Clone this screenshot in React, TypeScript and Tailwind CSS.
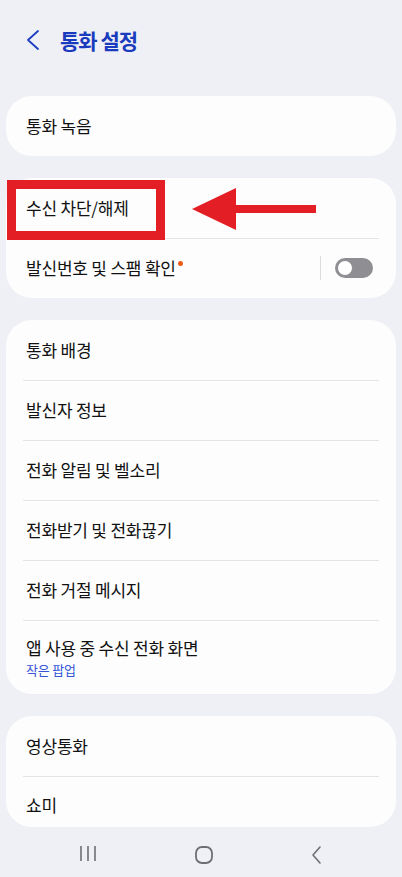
import React from "react";

const font = { fontFamily: '"Noto Sans CJK KR", "Noto Sans", sans-serif' };

function Divider() {
  return <div className="relative mx-[17px] -mb-px h-px bg-[#e4e4e8]" />;
}

function Row({ label, children }: { label: string; children?: React.ReactNode }) {
  return (
    <div className="flex h-[60px] items-center px-5 text-[17px] tracking-[-0.2px] text-[#111111]">
      <span>{label}</span>
      {children}
    </div>
  );
}

export default function App() {
  return (
    <div style={font} className="flex h-[877px] w-[402px] flex-col overflow-hidden bg-[#eff0f5]">
      {/* Header */}
      <div className="grid h-[96px] shrink-0 grid-cols-[60px_1fr] items-start pt-[26px]">
        <div className="flex justify-end pr-[18px] pt-[3px]">
          <svg width="18" height="22" viewBox="0 0 18 22" fill="none">
            <path d="M14 2 L4 11 L14 20" stroke="#1c3dbf" strokeWidth="1.8" strokeLinecap="round" strokeLinejoin="round" />
          </svg>
        </div>
        <div className="text-[21px] font-bold leading-[28px] tracking-[-1px] text-[#1a3bbd]">통화 설정</div>
      </div>

      <div className="flex flex-col gap-[22px] px-[6px]">
        {/* Card 1 */}
        <div className="rounded-[26px] bg-[#fdfdfd]">
          <Row label="통화 녹음" />
        </div>

        {/* Card 2 */}
        <div className="relative rounded-[26px] bg-[#fdfdfd]">
          <Row label="수신 차단/해제" />
          <Divider />
          <Row label="발신번호 및 스팸 확인">
            <span className="mb-[10px] ml-[2px] h-[5px] w-[5px] rounded-full bg-[#ef5b17]" />
            <div className="ml-auto flex items-center">
              <div className="h-[24px] w-px bg-[#dcdce0]" />
              <div className="ml-[14px] mr-[3px] flex h-[20px] w-[38px] items-center rounded-full bg-[#8e8e93] pl-[2px]">
                <div className="h-[16px] w-[16px] rounded-full border-[1.5px] border-[#8e8e93] bg-white" />
              </div>
            </div>
          </Row>
          {/* highlight box */}
          <div className="absolute left-[1px] top-[2px] h-[60px] w-[158px] border-[9px] border-[#e31e24]" />
          {/* arrow */}
          <svg className="absolute left-[186px] top-[10px]" width="124" height="42" viewBox="0 0 124 42">
            <polygon points="0,21 44,0 44,17 124,17 124,25 44,25 44,42" fill="#e31e24" />
          </svg>
        </div>

        {/* Card 3 */}
        <div className="rounded-[26px] bg-[#fdfdfd]">
          <Row label="통화 배경" />
          <Divider />
          <Row label="발신자 정보" />
          <Divider />
          <Row label="전화 알림 및 벨소리" />
          <Divider />
          <Row label="전화받기 및 전화끊기" />
          <Divider />
          <Row label="전화 거절 메시지" />
          <Divider />
          <div className="flex h-[74px] flex-col px-5 pt-[17px] tracking-[-0.2px]">
            <span className="text-[17px] leading-[22px] text-[#111111]">앱 사용 중 수신 전화 화면</span>
            <span className="mt-[2px] text-[13px] leading-[17px] text-[#3756d6]">작은 팝업</span>
          </div>
        </div>

        {/* Card 4 */}
        <div className="rounded-[26px] bg-[#fdfdfd]">
          <Row label="영상통화" />
          <Divider />
          <div className="flex h-[51px] items-start px-5 pt-[18px] text-[17px] leading-[22px] tracking-[-0.2px] text-[#111111]">쇼미</div>
        </div>
      </div>

      {/* Nav bar */}
      <div className="mt-auto flex h-[48px] items-start justify-between pl-[79px] pr-[78px] pt-[16px]">
        <svg width="18" height="18" viewBox="0 0 18 18" fill="none">
          <path d="M2 1 V16 M9 1 V16 M16 1 V16" stroke="#6e6e73" strokeWidth="1.6" />
        </svg>
        <svg width="20" height="20" viewBox="0 0 20 20" fill="none">
          <rect x="2" y="2" width="16" height="16" rx="6" stroke="#6e6e73" strokeWidth="1.8" />
        </svg>
        <svg width="14" height="20" viewBox="0 0 14 20" fill="none">
          <path d="M10 2 L3 10 L10 18" stroke="#6e6e73" strokeWidth="1.6" strokeLinecap="round" strokeLinejoin="round" />
        </svg>
      </div>
    </div>
  );
}
